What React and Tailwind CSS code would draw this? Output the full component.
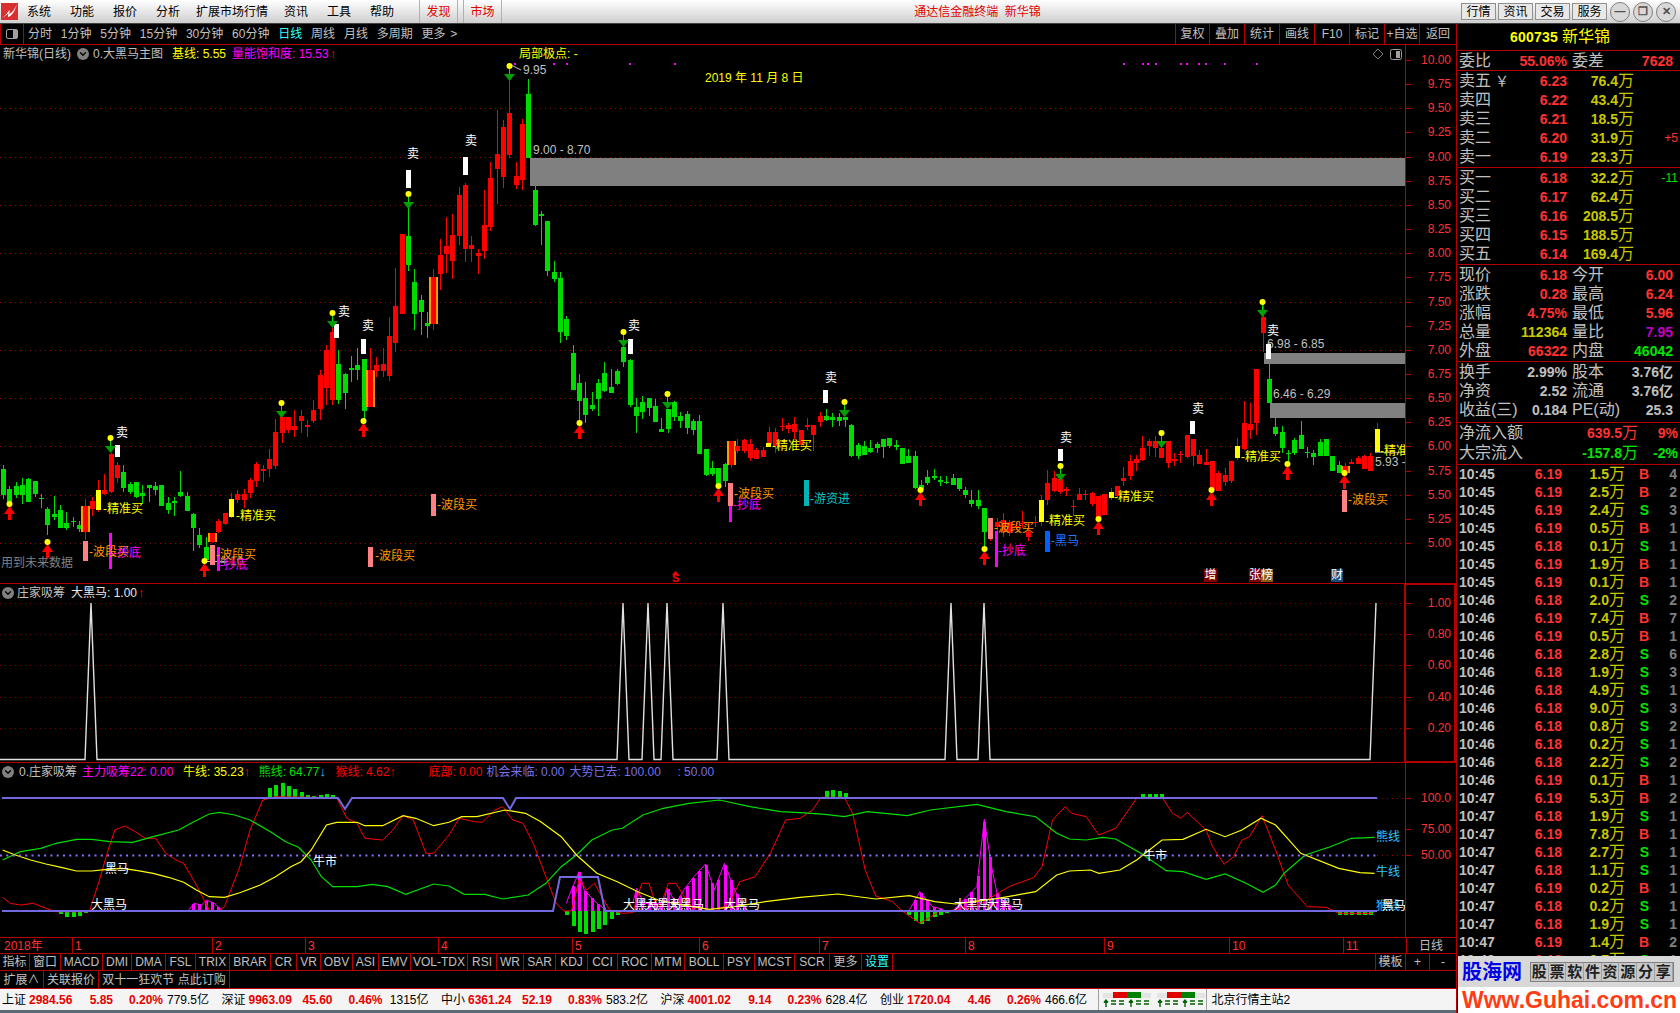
import { ChevronDown } from 'lucide-react';

const RED_LINE = '#b40000';

// [type, high, bodyTop, bodyBottom, low], page pixel coordinates
const candles = [
  ['g',465,469,495,499],['g',486,489,503,507],['g',482,486,495,498],['g',478,485,495,504],['g',478,479,502,502],
  ['g',481,481,494,497],['g',494,498,499,508],['g',507,509,525,535],['g',496,514,517,520],['g',505,510,528,528],
  ['g',512,523,528,530],['g',517,521,522,527],['g',521,525,529,532],['o',499,506,532,540],['r',497,501,509,516],
  ['y',480,490,510,512],['r',474,490,494,495],['r',453,454,492,493],['r',462,465,478,483],['g',465,472,488,492],
  ['g',482,484,492,494],['g',482,482,497,498],['g',485,493,496,504],['g',485,485,488,502],['g',482,486,490,495],
  ['g',485,485,506,506],['g',497,503,510,514],['g',497,501,503,516],['g',471,492,496,497],['g',492,496,511,511],
  ['g',513,514,528,551],['g',528,535,545,548],['g',537,547,560,563],['o',533,533,542,543],['r',519,521,532,533],
  ['r',513,513,524,525],['y',493,499,517,518],['r',490,494,500,503],['r',489,494,500,508],['r',478,480,493,498],
  ['r',462,464,481,487],['r',465,469,471,482],['r',449,459,469,477],['r',419,432,466,469],['r',417,417,433,443],
  ['r',417,417,430,433],['r',410,426,430,437],['r',410,416,421,433],['r',420,425,427,437],['r',400,410,421,423],
  ['r',370,375,409,420],['r',345,350,388,405],['r',328,332,400,405],['g',350,364,400,404],['g',373,374,393,409],
  ['g',356,368,370,382],['g',348,365,370,380],['g',359,359,411,420],['o',348,370,407,407],['r',357,365,371,377],
  ['r',348,364,371,377],['r',317,336,376,381],['r',268,306,343,352],['r',234,234,314,314],['g',195,236,265,271],
  ['g',269,282,314,330],['g',295,300,312,335],['g',312,323,326,338],['o',269,277,324,330],['r',239,255,274,290],
  ['r',217,246,254,273],['r',214,235,261,279],['r',187,195,236,245],['r',183,185,249,262],['r',236,245,249,262],
  ['r',249,253,256,274],['r',190,225,251,259],['r',162,178,227,231],['r',110,154,169,204],['r',120,127,177,188],
  ['r',80,113,155,158],['r',162,176,185,189],['r',119,124,180,190],['g',79,94,158,158],['g',185,190,225,226],
  ['g',211,214,216,245],['g',221,221,271,276],['g',261,272,279,282],['g',272,278,332,343],['g',316,319,336,340],
  ['g',345,353,390,390],['g',374,383,401,423],['g',382,398,415,423],['g',392,405,409,411],['g',379,383,399,416],
  ['g',362,373,391,392],['g',369,387,393,393],['g',369,371,384,385],['g',340,347,362,367],['g',359,360,405,407],
  ['g',398,407,416,433],['g',396,402,412,419],['g',398,398,408,416],['g',399,406,422,422],['g',418,429,432,432],
  ['g',409,409,429,433],['g',401,402,417,421],['g',412,416,421,428],['g',411,414,428,434],['g',419,421,430,435],
  ['g',415,421,454,454],['g',449,449,475,476],['g',461,468,474,476],['g',468,468,484,484],['g',463,464,481,487],
  ['o',441,441,465,468],['r',439,446,451,453],['r',439,440,451,453],['r',439,444,458,461],['r',448,450,459,459],
  ['r',447,450,457,457],['r',427,432,444,447],['r',428,432,446,453],['r',418,426,427,431],['r',423,425,429,433],
  ['r',417,424,432,439],['r',430,430,445,446],['r',418,425,427,430],['r',425,425,435,451],['r',412,416,422,427],
  ['g',409,416,420,421],['g',413,417,420,427],['g',413,417,421,426],['g',417,417,420,427],['g',424,425,456,457],
  ['g',443,445,456,459],['g',441,446,455,455],['g',440,448,452,453],['g',442,444,448,453],['g',439,439,447,458],
  ['g',438,438,446,448],['g',440,445,447,450],['g',448,448,464,464],['g',449,456,463,463],['g',451,456,488,489],
  ['g',480,485,490,492],['g',470,477,483,485],['g',469,476,478,480],['g',476,480,482,486],['g',476,482,483,484],
  ['g',474,478,485,485],['g',478,478,489,491],['g',487,490,495,498],['g',490,500,504,507],['g',490,500,506,509],
  ['g',508,508,532,548],['r',518,520,538,541],['r',518,522,527,533],['r',513,520,532,537],['r',520,522,533,536],
  ['r',522,526,528,530],['r',511,523,524,528],['r',523,532,537,541],['r',516,522,523,527],['y',495,500,522,526],
  ['r',470,483,500,505],['r',471,478,491,492],['r',479,479,492,494],['r',487,489,491,496],['r',500,506,507,516],
  ['r',488,494,500,500],['r',490,494,495,500],['r',492,493,504,506],['r',496,496,517,518],['r',494,494,515,515],
  ['y',488,492,498,500],['r',486,486,496,498],['r',467,478,481,486],['r',455,461,476,480],['r',455,459,463,471],
  ['r',436,448,460,461],['r',439,441,446,456],['r',436,441,448,457],['r',439,448,458,458],['r',441,441,463,468],
  ['r',453,459,461,466],['r',451,454,455,463],['r',435,435,457,458],['r',439,439,456,466],['r',450,455,464,464],
  ['r',449,462,465,465],['r',461,461,490,490],['r',471,473,491,491],['r',468,475,482,486],['r',461,461,481,483],
  ['y',438,446,458,460],['r',401,423,449,450],['r',403,424,430,439],['r',369,369,423,435],['r',303,317,333,352],
  ['g',363,379,403,403],['g',418,427,434,436],['g',426,432,448,453],['g',450,453,454,464],['g',438,440,453,455],
  ['g',421,435,449,449],['g',447,452,453,458],['g',450,453,457,465],['g',439,442,456,456],['g',439,439,456,456],
  ['g',456,456,471,471],['g',461,465,473,473],['o',463,466,473,474],['r',459,462,464,464],['r',456,458,464,464],
  ['r',455,456,469,469],['r',453,456,471,471],['y',423,429,452,453],
];

const candleX = (i) => Math.round(3 + 6.33 * i);

const buyMarks = [[9,504],[47,542],[204,561],[363,421],[579,423],[718,486],[920,490],[984,549],[1098,519],[1211,490],[1287,464],[1344,473]];
const sellMarks = [[110,438],[281,403],[332,313],[408,194],[509,66],[623,332],[667,394],[844,402],[1060,466],[1161,433],[1262,302]];
const whiteBars = [[115,445,12],[334,324,14],[361,339,15],[406,170,18],[463,157,18],[628,339,15],[823,390,13],[1058,449,12],[1190,421,13],[1266,344,15]];
const sellLabels = [[122,433],[344,312],[368,326],[413,154],[471,141],[634,326],[831,378],[1066,438],[1198,409],[1273,331]];
const blocks = [
  [83,541,5,20,'#ff8080'],[210,545,5,20,'#ff8080'],[368,547,5,20,'#ff8080'],[431,494,5,22,'#ff8080'],[728,483,5,23,'#ff8080'],[988,518,5,21,'#ff8080'],[1342,490,5,22,'#ff8080'],
  [109,533,3,36,'#ff00ff'],[217,547,3,24,'#ff00ff'],[729,506,3,16,'#ff00ff'],[995,531,3,36,'#ff00ff'],
  [804,480,5,26,'#00b4b4'],[1045,531,5,21,'#0060ff'],[766,443,5,4,'#ffff00'],
];
const chartLabels = [
  [89,552,'-波段买','#ff9900'],[216,555,'-波段买','#ff9900'],[375,556,'-波段买','#ff9900'],[437,505,'-波段买','#ff9900'],[734,494,'-波段买','#ff9900'],[994,528,'-波段买','#ff9900'],[1348,500,'-波段买','#ff9900'],
  [113,553,'-抄底','#ff00ff'],[220,565,'-抄底','#ff00ff'],[733,505,'-抄底','#ff00ff'],[998,551,'-抄底','#ff00ff'],
  [103,509,'-精准买','#ffff00'],[236,516,'-精准买','#ffff00'],[772,446,'-精准买','#ffff00'],[1045,521,'-精准买','#ffff00'],[1114,497,'-精准买','#ffff00'],[1241,457,'-精准买','#ffff00'],[1380,451,'-精准','#ffff00'],
  [810,499,'-游资进','#00c8c8'],[1051,541,'-黑马','#1e7cff'],
];
const purpleDots = [514,553,566,629,674,1123,1142,1147,1155,1180,1186,1198,1205,1224,1256];
const priceTicks = [10,9.75,9.5,9.25,9,8.75,8.5,8.25,8,7.75,7.5,7.25,7,6.75,6.5,6.25,6,5.75,5.5,5.25,5];
const priceY = (v) => Math.round(60 + (10 - v) * 96.6);

const peaks = [91,623,648,667,723,951,984];

const z7 = (a) => a.map(([x, y]) => [x / 1.96, 760 + y / 3]);
const z9 = (a) => a.map(([x, y]) => [800 + x / 2.376, 760 + y / 3]);
const pts = (a) => a.map(([x, y]) => `${x.toFixed(1)},${y.toFixed(1)}`).join(' ');

const yellowLine = [...z7([[5,270],[30,285],[60,300],[90,312],[120,322],[150,333],[180,333],[210,328],[240,325],[270,332],[300,340],[330,352],[360,367],[385,390],[410,410],[440,412],[470,398],[510,375],[540,350],[570,320],[590,305],[610,270],[640,195],[660,187],[700,187],[715,197],[750,197],[790,167],[815,175],[850,197],[880,187],[905,170],[935,170],[990,150],[1030,160],[1060,185],[1100,230],[1130,285],[1170,340],[1210,365],[1250,395],[1290,420],[1330,433],[1390,448],[1440,440],[1500,425],[1568,412]]),
  ...z9([[90,402],[180,417],[260,407],[320,425],[370,432],[470,415],[560,395],[610,345],[640,333],[690,330],[710,340],[760,330],[800,300],[860,240],[910,238],[965,208],[1010,230],[1050,210],[1095,175],[1130,195],[1190,280],[1280,325],[1330,338],[1365,340]])];
const greenLine = [...z7([[5,300],[40,275],[80,265],[110,250],[150,238],[180,238],[215,245],[260,247],[300,230],[350,210],[380,185],[410,162],[430,157],[460,165],[490,180],[530,215],[560,245],[585,262],[610,300],[630,350],[652,380],[700,380],[730,373],[760,380],[795,403],[850,372],[880,378],[910,403],[950,403],[985,417],[1035,405],[1070,370],[1100,320],[1130,285],[1160,240],[1200,210],[1220,205],[1260,165],[1300,145],[1350,130],[1410,120],[1470,140],[1530,155],[1568,158]]),
  ...z9([[60,163],[105,170],[160,155],[255,167],[310,150],[420,133],[490,155],[560,170],[610,220],[640,237],[680,240],[720,232],[750,237],[810,280],[870,332],[910,335],[965,358],[1010,342],[1060,370],[1100,397],[1130,375],[1150,340],[1200,285],[1260,260],[1310,235],[1365,232]])];
const redLine = [...z7([[5,412],[20,430],[40,435],[65,430],[90,445],[110,455],[175,455],[195,360],[210,280],[225,210],[245,198],[265,215],[285,235],[305,235],[325,280],[345,300],[360,310],[385,375],[410,450],[425,455],[440,440],[470,320],[490,210],[515,120],[540,110],[660,113],[680,175],[700,190],[715,235],[750,240],[770,210],[790,167],[810,180],[835,280],[850,280],[880,225],[900,175],[930,185],[945,187],[970,150],[985,140],[1005,180],[1025,190],[1045,250],[1065,330],[1090,430],[1105,453],[1120,453],[1135,360],[1150,390],[1165,370],[1195,450],[1220,460],[1240,458],[1258,370],[1272,370],[1290,455],[1310,370],[1325,370],[1345,420],[1360,450],[1400,455],[1430,430],[1450,365],[1480,350],[1510,280],[1540,180],[1568,175]]),
  ...z9([[30,150],[50,112],[105,112],[125,160],[155,330],[180,408],[220,425],[245,455],[285,490],[330,455],[365,450],[430,430],[470,400],[500,378],[555,353],[575,320],[600,180],[630,140],[645,160],[680,170],[710,225],[750,205],[800,115],[860,112],[885,160],[905,175],[920,157],[965,210],[980,260],[1008,313],[1030,290],[1050,240],[1068,230],[1098,167],[1130,270],[1160,375],[1205,440],[1250,442],[1280,460],[1360,460]])];

const magentaShapes = [
  z7([[370,450],[380,430],[395,435],[405,420],[420,430],[435,450]]),
  z7([[1110,430],[1120,390],[1135,335],[1145,390],[1170,430],[1190,452]]),
  z7([[1240,430],[1248,385],[1262,430],[1300,430],[1308,385],[1325,430],[1340,390],[1360,350],[1383,312],[1400,390],[1420,310],[1440,390],[1460,445]]),
  z9([[260,450],[285,395],[315,440],[340,448]]),
  z9([[365,450],[420,380],[438,178],[455,320],[470,410],[515,450]]),
];
const greenShapes = [
  z7([[525,85],[550,68],[575,85],[600,105],[620,110],[640,100],[655,105]]),
  z7([[105,455],[130,470],[150,472],[170,458]]),
  z7([[1105,455],[1130,515],[1150,525],[1170,510],[1215,458]]),
  z9([[55,95],[85,90],[110,100]]),
  z9([[810,102],[860,102]]),
  z9([[250,458],[285,495],[320,470],[350,458]]),
  z9([[1275,465],[1360,465]]),
];

const interp = (shape, x) => {
  for (let k = 0; k < shape.length - 1; k++) {
    const [x1, y1] = shape[k];
    const [x2, y2] = shape[k + 1];
    if (x >= x1 && x <= x2) return y1 + ((x - x1) / (x2 - x1)) * (y2 - y1);
  }
  return null;
};

const Bars = ({ shape, base, color, w = 3 }) => {
  const out = [];
  for (let i = 0; i < 218; i++) {
    const x = candleX(i);
    const y = interp(shape, x);
    if (y === null) continue;
    out.push(<rect key={i} x={x - 1} width={w} y={Math.min(y, base)} height={Math.abs(base - y)} fill={color} />);
  }
  return <g shapeRendering="crispEdges">{out}</g>;
};

const T = ({ x, y, c = '#c0c0c0', s = 12, a = 'start', children, ...rest }) => (
  <text x={x} y={y} fill={c} fontSize={s} textAnchor={a} dominantBaseline="central" {...rest}>{children}</text>
);

const Toggle = () => (
  <span className="w-[12px] h-[12px] rounded-full bg-[#808080] flex items-center justify-center shrink-0">
    <ChevronDown size={10} strokeWidth={3} color="#000000" />
  </span>
);

const MainChart = () => (
  <svg width="1456" height="539" viewBox="0 45 1456 539" className="block">
    {[9.5,9,8.5,8,7.5,7,6.5,6,5.5,5].map((v) => (
      <line key={v} x1="0" x2="1405" y1={priceY(v) + 0.5} y2={priceY(v) + 0.5} stroke="#a00000" strokeDasharray="1 4" />
    ))}
    <g shapeRendering="crispEdges">
      {candles.map(([type, hi, top, bot, lo], i) => {
        const x = candleX(i);
        const body = type === 'g' ? '#00dc00' : type === 'y' ? '#ffff00' : '#ff0000';
        const wick = type === 'g' ? '#00dc00' : '#ff0000';
        return (
          <g key={i}>
            <rect x={x} y={hi} width="1" height={lo - hi} fill={wick} />
            {type === 'o' && <rect x={x - 4} y={top} width="9" height={Math.max(bot - top, 1)} fill="#ff9900" />}
            <rect x={x - 2} y={top} width="5" height={Math.max(bot - top, 1)} fill={body} />
          </g>
        );
      })}
      <rect x="530" y="158" width="875" height="28" fill="#808080" />
      <rect x="1264" y="353" width="141" height="11" fill="#808080" />
      <rect x="1270" y="403" width="135" height="15" fill="#808080" />
      <rect x="1375" y="452" width="30" height="1" fill="#808080" />
      {purpleDots.map((x) => <rect key={x} x={x} y="63" width="2" height="2" fill="#ff00ff" />)}
    </g>
    <T x="533" y="150">9.00 - 8.70</T>
    <T x="1267" y="344">6.98 - 6.85</T>
    <T x="1273" y="394">6.46 - 6.29</T>
    <T x="1375" y="462">5.93 -</T>
    <T x="523" y="70">9.95</T>
    <polyline points="511,65 521,70" stroke="#c0c0c0" fill="none" />
    <line x1="205" x2="228" y1="561.5" y2="561.5" stroke="#c0c0c0" />
    <T x="220" y="561" c="#808080">4.10</T>
    <g shapeRendering="crispEdges">
      {blocks.map(([x, y, w, h, c], i) => <rect key={i} x={x} y={y} width={w} height={h} fill={c} />)}
      {whiteBars.map(([x, y, h]) => <rect key={x} x={x} y={y} width="5" height={h} fill="#ffffff" />)}
    </g>
    {sellLabels.map(([x, y]) => <T key={x} x={x} y={y} c="#ffffff" a="middle">卖</T>)}
    {chartLabels.map(([x, y, text, c], i) => <T key={i} x={x} y={y} c={c}>{text}</T>)}
    {buyMarks.map(([x, y]) => (
      <g key={x}>
        <rect x={x - 1} y={y + 8} width="3" height="8" fill="#ff0000" />
        <polygon points={`${x + 0.5},${y + 2} ${x + 6},${y + 10} ${x - 5},${y + 10}`} fill="#ff0000" />
        <circle cx={x + 0.5} cy={y} r="3" fill="#ffff00" />
      </g>
    ))}
    {sellMarks.map(([x, y]) => (
      <g key={x}>
        <rect x={x} y={y} width="1" height="12" fill="#00dc00" />
        <polygon points={`${x + 0.5},${y + 15} ${x + 6},${y + 8} ${x - 5},${y + 8}`} fill="#00a000" />
        <circle cx={x + 0.5} cy={y} r="3" fill="#ffff00" />
      </g>
    ))}
    <g shapeRendering="crispEdges">
      <rect x="1204" y="569" width="13" height="13" fill="#800000" />
      <rect x="1249" y="569" width="12" height="13" fill="#800000" />
      <rect x="1261" y="569" width="12" height="13" fill="#8a5a14" />
      <rect x="1331" y="569" width="12" height="13" fill="#1a4a78" />
    </g>
    <T x="1210.5" y="575" c="#ffffff" a="middle">增</T>
    <T x="1255" y="575" c="#ffffff" a="middle">张</T>
    <T x="1267" y="575" c="#ffffff" a="middle">榜</T>
    <T x="1337" y="575" c="#ffffff" a="middle">财</T>
    <T x="672" y="578" c="#ff0000" s={11} fontWeight="700">S</T>
    <polygon points="675.5,571 679,575 672,575" fill="#ff0000" />
    <T x="1" y="563" c="#808080">用到未来数据</T>
    <T x="519" y="54" c="#ffff00">局部极点: -</T>
    <T x="705" y="78" c="#ffff00">2019 年 11 月 8 日</T>
    <polygon points="1378,49 1383,54 1378,59 1373,54" fill="none" stroke="#808080" />
    <rect x="1390.5" y="49.5" width="11" height="10" rx="2" fill="#000000" stroke="#a0a0a0" />
    <rect x="1396" y="51" width="4" height="7" fill="#a0a0a0" />
    <rect x="1405" y="45" width="51" height="538" fill="#000000" />
    <rect x="1405" y="45" width="1" height="538" fill={RED_LINE} />
    {priceTicks.map((v) => (
      <g key={v}>
        <rect x="1405" y={priceY(v)} width="6" height="1" fill={RED_LINE} />
        <T x="1451" y={priceY(v)} c="#ff3232" a="end">{v.toFixed(2)}</T>
      </g>
    ))}
    <rect x="0" y="583" width="1456" height="1" fill={RED_LINE} />
  </svg>
);

const SpikeChart = () => (
  <svg width="1456" height="179" viewBox="0 584 1456 179" className="block">
    {[603,634,665,697,728].map((y) => (
      <line key={y} x1="0" x2="1405" y1={y + 0.5} y2={y + 0.5} stroke="#800000" strokeDasharray="1 4" />
    ))}
    <polyline
      fill="none"
      stroke="#e0e0e0"
      strokeWidth="1.4"
      points={`0,759.5 ${peaks.map((x) => `${x - 6},759.5 ${x},603 ${x + 6},759.5`).join(' ')} 1370,759.5 1376,603`}
    />
    <rect x="1405" y="584" width="50" height="178" fill="none" stroke={RED_LINE} strokeWidth="2" />
    {[[1,603],[0.8,634],[0.6,665],[0.4,697],[0.2,728]].map(([v, y]) => (
      <g key={y}>
        <rect x="1405" y={y} width="6" height="1" fill={RED_LINE} />
        <T x="1451" y={y} c="#ff3232" a="end">{v.toFixed(2)}</T>
      </g>
    ))}
    <rect x="0" y="762" width="1456" height="1" fill={RED_LINE} />
  </svg>
);

const FlowChart = () => (
  <svg width="1456" height="175" viewBox="0 763 1456 175" className="block">
    {magentaShapes.map((s, i) => <Bars key={i} shape={s} base={911} color="#ff00ff" />)}
    {greenShapes.map((s, i) => <Bars key={i} shape={s} base={s[0][1] < 860 ? 798 : 911} color="#00e000" w={4} />)}
    {magentaShapes.map((s, i) => <polyline key={i} points={pts(s)} fill="none" stroke="#ff00ff" />)}
    <polyline points={pts(redLine)} fill="none" stroke="#ff0000" />
    <polyline points={pts(greenLine)} fill="none" stroke="#00e000" strokeWidth="1.2" />
    <polyline points={pts(yellowLine)} fill="none" stroke="#ffff00" strokeWidth="1.2" />
    <line x1="0" x2="1376" y1="855.5" y2="855.5" stroke="#8a70ff" strokeWidth="2" strokeDasharray="2 4.3" />
    <polyline points="2,798 338,798 345,809 352,798 503,798 510,809 516,798 1377,798" fill="none" stroke="#7468e0" strokeWidth="2" />
    <polyline points="2,911 553,911 560,877 598,877 605,911 1377,911" fill="none" stroke="#7468e0" strokeWidth="2" />
    <T x="105" y="869" c="#ffffff">黑马</T>
    <T x="313" y="862" c="#ffffff">牛市</T>
    <T x="1143" y="856" c="#ffffff">牛市</T>
    {[91,623,645,668,724,954,987].map((x) => <T key={x} x={x} y="905" c="#ffffff">大黑马</T>)}
    <T x="1376" y="837" c="#30c8ff">熊线</T>
    <T x="1376" y="872" c="#30c8ff">牛线</T>
    <T x="1376" y="906" c="#30c8ff">猴线</T>
    <T x="1382" y="906" c="#ffffff">黑马</T>
    <rect x="1405" y="763" width="51" height="174" fill="#000000" />
    <rect x="1405" y="763" width="1" height="174" fill={RED_LINE} />
    <line x1="1377" x2="1405" y1="798.5" y2="798.5" stroke="#a00000" strokeDasharray="1 4" />
    <line x1="1377" x2="1405" y1="855.5" y2="855.5" stroke="#a00000" strokeDasharray="1 4" />
    {[[798,'100.0'],[829,'75.00'],[855,'50.00']].map(([y, v]) => (
      <g key={y}>
        <rect x="1405" y={y} width="6" height="1" fill={RED_LINE} />
        <T x="1451" y={y} c="#ff3232" a="end">{v}</T>
      </g>
    ))}
    <rect x="0" y="937" width="1456" height="1" fill={RED_LINE} />
  </svg>
);

const menuItems = ['系统', '功能', '报价', '分析', '扩展市场行情', '资讯', '工具', '帮助'];
const rangeTabs = ['分时', '1分钟', '5分钟', '15分钟', '30分钟', '60分钟', '日线', '周线', '月线', '多周期', '更多'];
const toolTabs = [
  ['复权', 'w-[34px]'], ['叠加', 'w-[35px]'], ['统计', 'w-[35px]'], ['画线', 'w-[35px]'],
  ['F10', 'w-[35px]'], ['标记', 'w-[35px]'], ['+自选', 'w-[35px]'], ['返回', 'w-[37px]'],
];
const months = [
  ['1', 'w-[140px]'], ['2', 'w-[93px]'], ['3', 'w-[133px]'], ['4', 'w-[134px]'], ['5', 'w-[127px]'], ['6', 'w-[120px]'],
  ['7', 'w-[146px]'], ['8', 'w-[139px]'], ['9', 'w-[125px]'], ['10', 'w-[114px]'], ['11', 'w-[63px]'],
];
const indexTabs = [
  ['指标', 'w-[30px]'], ['窗口', 'w-[31px]'], ['MACD', 'w-[42px]'], ['DMI', 'w-[29px]'], ['DMA', 'w-[34px]'], ['FSL', 'w-[30px]'],
  ['TRIX', 'w-[34px]'], ['BRAR', 'w-[41px]'], ['CR', 'w-[26px]'], ['VR', 'w-[24px]'], ['OBV', 'w-[32px]'], ['ASI', 'w-[26px]'],
  ['EMV', 'w-[32px]'], ['VOL-TDX', 'w-[57px]'], ['RSI', 'w-[29px]'], ['WR', 'w-[27px]'], ['SAR', 'w-[32px]'], ['KDJ', 'w-[32px]'],
  ['CCI', 'w-[30px]'], ['ROC', 'w-[34px]'], ['MTM', 'w-[33px]'], ['BOLL', 'w-[39px]'], ['PSY', 'w-[31px]'], ['MCST', 'w-[40px]'],
  ['SCR', 'w-[35px]'], ['更多', 'w-[32px]'],
];
const marketStats = [
  ['上证', '2984.56', '5.85', '0.20%', '779.5亿'],
  ['深证', '9963.09', '45.60', '0.46%', '1315亿'],
  ['中小', '6361.24', '52.19', '0.83%', '583.2亿'],
  ['沪深', '4001.02', '9.14', '0.23%', '628.4亿'],
  ['创业', '1720.04', '4.46', '0.26%', '466.6亿'],
];

const asks = [['卖五', '6.23', '76.4', ''], ['卖四', '6.22', '43.4', ''], ['卖三', '6.21', '18.5', ''], ['卖二', '6.20', '31.9', '+5'], ['卖一', '6.19', '23.3', '']];
const bids = [['买一', '6.18', '32.2', '-11'], ['买二', '6.17', '62.4', ''], ['买三', '6.16', '208.5', ''], ['买四', '6.15', '188.5', ''], ['买五', '6.14', '169.4', '']];

const trades = [
  ['10:45','6.19','1.5','B','4'],['10:45','6.19','2.5','B','2'],['10:45','6.19','2.4','S','3'],['10:45','6.19','0.5','B','1'],
  ['10:45','6.18','0.1','S','1'],['10:45','6.19','1.9','B','1'],['10:45','6.19','0.1','B','1'],['10:46','6.18','2.0','S','2'],
  ['10:46','6.19','7.4','B','7'],['10:46','6.19','0.5','B','1'],['10:46','6.18','2.8','S','6'],['10:46','6.18','1.9','S','3'],
  ['10:46','6.18','4.9','S','1'],['10:46','6.18','9.0','S','3'],['10:46','6.18','0.8','S','2'],['10:46','6.18','0.2','S','1'],
  ['10:46','6.18','2.2','S','2'],['10:46','6.19','0.1','B','1'],['10:47','6.19','5.3','B','2'],['10:47','6.18','1.9','S','1'],
  ['10:47','6.19','7.8','B','1'],['10:47','6.18','2.7','S','1'],['10:47','6.18','1.1','S','1'],['10:47','6.19','0.2','B','1'],
  ['10:47','6.18','0.2','S','1'],['10:47','6.18','1.9','S','1'],['10:47','6.19','1.4','B','2'],['10:48','6.18','0.7','S','1'],
];

const Label = ({ children, className = 'w-[45px]' }) => (
  <span className={`${className} text-[16px] text-[#c0c0c0] whitespace-nowrap shrink-0`}>{children}</span>
);

const Pair = ({ label, value, color, label2, value2, color2 }) => (
  <div className="flex h-[19px] items-center leading-none pl-[1px]">
    <Label>{label}</Label>
    <span className={`w-[63px] text-right text-[14px] font-bold ${color}`}>{value}</span>
    <Label className="w-[55px] pl-[5px]">{label2}</Label>
    <span className={`w-[51px] text-right text-[14px] font-bold whitespace-nowrap ${color2}`}>{value2}</span>
  </div>
);

const QuoteRow = ({ row, extra }) => (
  <div className="flex h-[19px] items-center leading-none pl-[1px]">
    <Label>{row[0]}{extra}</Label>
    <span className="w-[63px] text-right text-[14px] font-bold text-[#ff3232]">{row[1]}</span>
    <span className="w-[67px] text-right text-[14px] font-bold text-[#c8c800]">
      {row[2]}<span className="text-[16px] font-normal">万</span>
    </span>
    <span className={`w-[44px] text-right text-[12px] ${row[3].startsWith('+') ? 'text-[#ff3232]' : 'text-[#00e600]'}`}>{row[3]}</span>
  </div>
);

const Section = ({ children, className = '' }) => (
  <div className={`border-b border-[#b40000] ${className}`}>{children}</div>
);

const QuotePanel = () => (
  <div className="w-[224px] shrink-0 border-l border-[#b40000] bg-black overflow-hidden pl-[1px]">
    <Section className="h-[27px] flex items-center justify-center gap-[4px] text-[#ffff00] pr-[18px]">
      <span className="text-[14px] font-bold tracking-[0.2px]">600735</span>
      <span className="text-[16px]">新华锦</span>
    </Section>
    <Section className="h-[20px]">
      <Pair label="委比" value="55.06%" color="text-[#ff3232]" label2="委差" value2="7628" color2="text-[#ff3232]" />
    </Section>
    <Section className="h-[97px]">
      {asks.map((r, i) => <QuoteRow key={r[0]} row={r} extra={i === 0 ? <span className="text-[14px]"> ￥</span> : null} />)}
    </Section>
    <Section className="h-[97px]">
      {bids.map((r) => <QuoteRow key={r[0]} row={r} />)}
    </Section>
    <Section className="h-[97px]">
      <Pair label="现价" value="6.18" color="text-[#ff3232]" label2="今开" value2="6.00" color2="text-[#ff3232]" />
      <Pair label="涨跌" value="0.28" color="text-[#ff3232]" label2="最高" value2="6.24" color2="text-[#ff3232]" />
      <Pair label="涨幅" value="4.75%" color="text-[#ff3232]" label2="最低" value2="5.96" color2="text-[#ff3232]" />
      <Pair label="总量" value="112364" color="text-[#c8c800]" label2="量比" value2="7.95" color2="text-[#c000c0]" />
      <Pair label="外盘" value="66322" color="text-[#ff3232]" label2="内盘" value2="46042" color2="text-[#00e600]" />
    </Section>
    <Section className="h-[61px]">
      <Pair label="换手" value="2.99%" color="text-[#c0c0c0]" label2="股本" value2="3.76亿" color2="text-[#c0c0c0]" />
      <Pair label="净资" value="2.52" color="text-[#c0c0c0]" label2="流通" value2="3.76亿" color2="text-[#c0c0c0]" />
      <Pair label="收益(三)" value="0.184" color="text-[#c0c0c0]" label2="PE(动)" value2="25.3" color2="text-[#c0c0c0]" />
    </Section>
    <Section className="h-[42px]">
      {[['净流入额', '639.5', '9%', 'text-[#ff3232]'], ['大宗流入', '-157.8', '-2%', 'text-[#00e600]']].map(([l, v, p, c]) => (
        <div key={l} className="flex h-[20px] items-center leading-none pl-[1px]">
          <Label className="w-[70px]">{l}</Label>
          <span className={`w-[109px] text-right text-[14px] font-bold ${c}`}>
            {v}<span className="text-[16px] font-normal">万</span>
          </span>
          <span className={`w-[40px] text-right text-[14px] font-bold ${c}`}>{p}</span>
        </div>
      ))}
    </Section>
    {trades.map((t, i) => (
      <div key={i} className="flex h-[18px] items-center leading-none text-[14px] font-bold pl-[1px]">
        <span className="w-[40px] text-[#c0c0c0]">{t[0]}</span>
        <span className="w-[63px] text-right text-[#ff3232]">{t[1]}</span>
        <span className="w-[63px] text-right text-[#c8c800]">
          {t[2]}<span className="text-[16px] font-normal">万</span>
        </span>
        <span className={`w-[24px] text-right ${t[3] === 'B' ? 'text-[#ff3232]' : 'text-[#00e600]'}`}>{t[3]}</span>
        <span className="w-[28px] text-right text-[#808080]">{t[4]}</span>
      </div>
    ))}
  </div>
);

const Watermark = () => (
  <div className="absolute right-0 bottom-0 w-[222px] h-[57px] flex flex-col">
    <div className="h-[31px] bg-[#d8d8d8] flex items-center pl-[4px]">
      <span className="w-[68px] text-[20px] font-bold text-[#0000e6] leading-none">股海网</span>
      <div className="flex border border-[#808080]">
        {['股', '票', '软', '件', '资', '源', '分', '享'].map((c) => (
          <span key={c} className="w-[17.7px] h-[18px] flex items-center justify-center text-[15px] font-bold text-[#202020] border-r border-[#a0a0a0] bg-[#c8c8c8] leading-none">{c}</span>
        ))}
      </div>
    </div>
    <div className="flex-1 bg-white flex items-center pl-[4px]">
      <span className="text-[23px] font-bold text-[#ff3c14] leading-none whitespace-nowrap">Www.Guhai.com.cn</span>
    </div>
  </div>
);

const StatusIcon = () => (
  <svg width="48" height="15" viewBox="0 0 48 15">
    <rect x="0" y="1" width="48" height="5" fill="#e4e4e4" />
    <rect x="10" y="0" width="14" height="6" fill="#e00000" />
    <rect x="24" y="0" width="14" height="6" fill="#008000" />
    <path d="M3 8v7M1 10.5l2-2.5 2 2.5M28 8v7M26 10.5l2-2.5 2 2.5" stroke="#006000" strokeWidth="1.4" fill="none" />
    <path d="M8 9h5M8 12h5M16 9h5M16 12h5M33 9h5M33 12h5M41 9h5M41 12h5" stroke="#006000" strokeWidth="1.4" />
  </svg>
);

const App = () => (
  <div className="relative w-[1680px] h-[1013px] overflow-hidden bg-black flex flex-col [font-family:'Liberation_Sans','Noto_Sans_CJK_SC',sans-serif] text-[12px] text-[#c0c0c0]">
    {/* menu bar */}
    <div className="h-[24px] shrink-0 flex items-center bg-gradient-to-b from-white to-[#cfcfcf] border-b border-[#404040] text-black">
      <svg width="17" height="17" viewBox="0 0 17 17" className="ml-[1px] shrink-0">
        <rect width="17" height="17" fill="#d83030" />
        <path d="M1 15C5 13 7 8 9 7l-1 4c3-1 6-5 8-10-2 7-5 12-9 13 0-2 0-3 1-4-2 1-3 3-7 5z" fill="#ffffff" />
      </svg>
      <div className="flex ml-[9px] gap-[19px]">
        {menuItems.map((m) => (
          <span key={m} className={m === '扩展市场行情' ? '-mx-[3px]' : ''}>{m}</span>
        ))}
      </div>
      <div className="flex h-full ml-[25px]">
        <span className="w-[39px] border-x border-[#b0b0b0] flex items-center justify-center text-[#e00000]">发现</span>
        <span className="w-[5px]" />
        <span className="w-[39px] border-x border-[#b0b0b0] flex items-center justify-center text-[#e00000]">市场</span>
      </div>
      <span className="ml-[412px] text-[#e00000] whitespace-nowrap">通达信金融终端&nbsp;&nbsp;新华锦</span>
      <div className="ml-auto flex items-center gap-[2px] pr-[4px]">
        {['行情', '资讯', '交易', '服务'].map((b) => (
          <span key={b} className="w-[35px] h-[17px] border border-[#909090] bg-[#e8e8e8] flex items-center justify-center">{b}</span>
        ))}
        {['—', '❐', '✕'].map((b) => (
          <span key={b} className="ml-[1px] w-[20px] h-[20px] rounded-full border border-[#808080] bg-[#d8d8d8] flex items-center justify-center text-[11px] font-bold text-[#505050]">{b}</span>
        ))}
      </div>
    </div>

    <div className="flex flex-1 min-h-0">
      <div className="w-[1456px] shrink-0 flex flex-col">
        {/* period toolbar */}
        <div className="h-[21px] shrink-0 flex items-center border-b border-[#b40000]">
          <div className="w-[24px] h-full border-x border-[#b40000] flex items-center justify-center">
            <span className="w-[12px] h-[10px] border border-[#a0a0a0] rounded-[2px] flex justify-end">
              <span className="w-[4px] bg-[#a0a0a0]" />
            </span>
          </div>
          <div className="flex items-center ml-[4px] gap-[8.8px]">
            {rangeTabs.map((t) => (
              <span key={t} className={t === '日线' ? 'text-[#30ffff]' : ''}>{t}</span>
            ))}
            <span className="-ml-[4px]">&gt;</span>
          </div>
          <div className="ml-auto flex h-full">
            {toolTabs.map(([t, w]) => (
              <span key={t} className={`${w} border-l border-[#b40000] flex items-center justify-center`}>{t}</span>
            ))}
          </div>
        </div>

        <div className="relative shrink-0">
          <div className="absolute left-[3px] top-[2px] flex items-center leading-none whitespace-nowrap">
            <span className="w-[74px]">新华锦(日线)</span>
            <Toggle />
            <span className="ml-[4px] w-[79px]">0.大黑马主图</span>
            <span className="w-[60px] text-[#ffff00]">基线: 5.55</span>
            <span className="text-[#ff00ff]">量能饱和度: 15.53</span>
            <span className="text-[#ff0000] ml-[1px] text-[13px] font-bold">↑</span>
          </div>
          <MainChart />
        </div>

        <div className="relative shrink-0">
          <div className="absolute left-[2px] top-[2px] flex items-center leading-none whitespace-nowrap">
            <Toggle />
            <span className="ml-[3px] w-[54px]">庄家吸筹</span>
            <span className="text-[#e8e8e8]">大黑马: 1.00</span>
            <span className="text-[#ff0000] ml-[1px] text-[13px] font-bold">↑</span>
          </div>
          <SpikeChart />
        </div>

        <div className="relative shrink-0">
          <div className="absolute left-[2px] top-[2px] flex items-center leading-none whitespace-nowrap">
            <Toggle />
            <span className="ml-[5px] w-[63px]">0.庄家吸筹</span>
            <span className="w-[101px] text-[#ff00ff]">主力吸筹22: 0.00</span>
            <span className="text-[#ffff00]">牛线: 35.23</span>
            <span className="w-[15px] text-[#ff0000] text-[13px] font-bold">↑</span>
            <span className="text-[#00e000]">熊线: 64.77</span>
            <span className="w-[16px] text-[#30c8ff] text-[13px] font-bold">↓</span>
            <span className="text-[#ff0000]">猴线: 4.62</span>
            <span className="w-[39px] text-[#ff0000] text-[13px] font-bold">↑</span>
            <span className="w-[58px] text-[#ff0000]">底部: 0.00</span>
            <span className="w-[83px] text-[#7b70e8]">机会来临: 0.00</span>
            <span className="w-[108px] text-[#7b70e8]">大势已去: 100.00</span>
            <span className="text-[#7b70e8]">: 50.00</span>
          </div>
          <FlowChart />
        </div>

        {/* date axis */}
        <div className="h-[16px] shrink-0 flex border-b border-[#b40000] text-[#ff3232] leading-none">
          <span className="w-[72px] pl-[4px] flex items-center">2018年</span>
          {months.map(([m, w]) => (
            <span key={m} className={`${w} border-l border-[#b40000] pl-[2px] flex items-center`}>{m}</span>
          ))}
          <span className="flex-1 border-l border-[#b40000] pl-[12px] flex items-center text-[#c0c0c0]">日线</span>
        </div>

        {/* indicator tabs */}
        <div className="h-[17px] shrink-0 flex border-b border-[#b40000] leading-none">
          {indexTabs.map(([t, w]) => (
            <span key={t} className={`${w} shrink-0 border-r border-[#b40000] flex items-center justify-center whitespace-nowrap`}>{t}</span>
          ))}
          <span className="w-[31px] shrink-0 border-r border-[#b40000] flex items-center justify-center text-[#30ffff]">设置</span>
          <span className="flex-1" />
          <span className="w-[31px] border-x border-[#b40000] flex items-center justify-center">模板</span>
          <span className="w-[24px] border-r border-[#b40000] flex items-center justify-center">+</span>
          <span className="w-[26px] flex items-center justify-center">-</span>
        </div>

        <div className="h-[18px] shrink-0 flex border-b border-[#b40000] leading-none">
          <span className="w-[44px] border-r border-[#b40000] flex items-center justify-center">扩展∧</span>
          <span className="w-[55px] border-r border-[#b40000] flex items-center justify-center">关联报价</span>
          <span className="w-[131px] border-r border-[#b40000] flex items-center justify-center whitespace-nowrap">双十一狂欢节 点此订购</span>
        </div>

        {/* market status */}
        <div className="h-[21px] shrink-0 flex items-center bg-[#f4f4f4] text-black leading-none pl-[2px] whitespace-nowrap">
          {marketStats.map(([name, val, chg, pct, amt]) => (
            <div key={name} className="w-[219.5px] shrink-0 flex items-center">
              <span className="w-[27px]">{name}</span>
              <span className="w-[46px] font-bold text-[#e60000]">{val}</span>
              <span className="w-[38px] text-right font-bold text-[#e60000]">{chg}</span>
              <span className="w-[50px] text-right font-bold text-[#e60000]">{pct}</span>
              <span className="w-[46px] text-right">{amt}</span>
            </div>
          ))}
          <div className="-ml-[2px] h-full flex items-center gap-[6px] border-x border-[#a0a0a0] pl-[4px] pr-[1px]">
            <StatusIcon />
            <StatusIcon />
          </div>
          <span className="ml-[5px]">北京行情主站2</span>
        </div>
        <div className="h-[3px] shrink-0 bg-[#5a6a76]" />
      </div>
      <QuotePanel />
    </div>
    <Watermark />
  </div>
);

export default App;
